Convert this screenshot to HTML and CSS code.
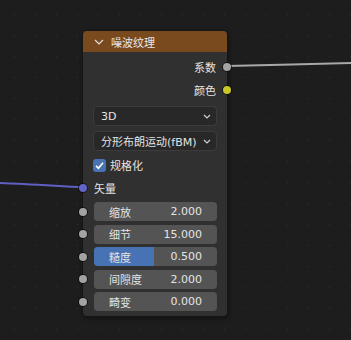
FILE: index.html
```html
<!DOCTYPE html>
<html lang="zh">
<head>
  <meta charset="UTF-8" />
  <title>噪波纹理</title>
  <link rel="stylesheet" href="styles.css">
</head>
<body>
  <div class="canvas">
    <svg class="wires" width="351" height="340" viewBox="0 0 351 340">
      <path d="M227 66 C 280 65, 300 64, 351 63" stroke="#a8a8a8" stroke-width="2" fill="none"/>
      <path d="M0 183 C 30 184, 55 186, 83 187.5" stroke="#5f5fc4" stroke-width="2" fill="none"/>
    </svg>

    <div class="node">
      <div class="node-header">
        <svg class="chevron" width="10" height="6" viewBox="0 0 10 6">
          <path d="M1 1 L5 5 L9 1" stroke="#e0e0e0" stroke-width="1.2" fill="none"/>
        </svg>
        <span>噪波纹理</span>
      </div>

      <div class="node-body">
        <div class="out-row">系数<i class="socket out grey"></i></div>
        <div class="out-row">颜色<i class="socket out yellow"></i></div>

        <div class="dropdowns">
          <div class="dropdown">
            <span>3D</span>
            <svg width="8" height="5" viewBox="0 0 8 5"><path d="M1 1 L4 4 L7 1" stroke="#d0d0d0" stroke-width="1.2" fill="none"/></svg>
          </div>
          <div class="dropdown">
            <span>分形布朗运动(fBM)</span>
            <svg width="8" height="5" viewBox="0 0 8 5"><path d="M1 1 L4 4 L7 1" stroke="#d0d0d0" stroke-width="1.2" fill="none"/></svg>
          </div>
        </div>

        <div class="check-row">
          <span class="checkbox">
            <svg width="13" height="13" viewBox="0 0 13 13"><path d="M3 6.8 L5.4 9.2 L10 3.8" stroke="#fff" stroke-width="1.7" fill="none"/></svg>
          </span>
          规格化
        </div>

        <div class="in-row"><i class="socket in purple"></i>矢量</div>

        <div class="fields">
          <div class="field"><i class="socket in grey"></i><span>缩放</span><span>2.000</span></div>
          <div class="field"><i class="socket in grey"></i><span>细节</span><span>15.000</span></div>
          <div class="field"><i class="socket in grey"></i><b class="fill" style="width: 49%"></b><span>糙度</span><span>0.500</span></div>
          <div class="field"><i class="socket in grey"></i><span>间隙度</span><span>2.000</span></div>
          <div class="field"><i class="socket in grey"></i><span>畸变</span><span>0.000</span></div>
        </div>
      </div>
    </div>
  </div>
</body>
</html>
```

FILE: styles.css
```css
body {
  margin: 0;
  padding: 0;
  background: #1d1d1d;
  font-family: "DejaVu Sans", "Noto Sans CJK SC", sans-serif;
  font-size: 11px;
  color: #e4e4e4;
}

.canvas {
  position: relative;
  width: 351px;
  height: 340px;
  overflow: hidden;
  background-color: #1d1d1d;
  background-image: radial-gradient(circle, #262626 0.8px, transparent 1.2px);
  background-size: 21px 21px;
  background-position: 4px 4px;
}

.wires {
  position: absolute;
  left: 0;
  top: 0;
}

.node {
  position: absolute;
  left: 83px;
  top: 31px;
  width: 144px;
  height: 285px;
  background: #303030;
  border-radius: 4px;
  box-shadow: 0 0 0 1px #161616, 1px 2px 5px rgba(0, 0, 0, 0.5);
}

.node-header {
  height: 21px;
  background: #7a4a1f;
  border-radius: 4px 4px 0 0;
  display: flex;
  align-items: center;
  padding-left: 11px;
  gap: 7px;
  color: #e8e8e8;
}

.node-body {
  display: flex;
  flex-direction: column;
  padding: 3px 10px 0 10px;
}

.socket {
  position: absolute;
  width: 8px;
  height: 8px;
  border-radius: 50%;
  top: 50%;
  margin-top: -4px;
  box-shadow: 0 0 0 1px rgba(0, 0, 0, 0.55);
}

.socket.out { right: -14px; }
.socket.in { left: -14px; }
.socket.grey { background: #a3a3a3; }
.socket.yellow { background: #c7c729; }
.socket.purple { background: #6363c7; }

.out-row {
  position: relative;
  height: 23px;
  display: flex;
  align-items: center;
  justify-content: flex-end;
  padding-right: 1px;
}

.dropdowns {
  display: flex;
  flex-direction: column;
  gap: 5px;
  margin-top: 5px;
}

.dropdown {
  height: 20px;
  box-sizing: border-box;
  background: #282828;
  border: 1px solid #3c3c3c;
  border-radius: 4px;
  display: flex;
  align-items: center;
  justify-content: space-between;
  padding: 0 5px 0 7px;
}

.check-row {
  height: 20px;
  margin-top: 4px;
  display: flex;
  align-items: center;
  gap: 4px;
}

.checkbox {
  width: 13px;
  height: 13px;
  background: #4772b3;
  border-radius: 3px;
  display: flex;
}

.in-row {
  position: relative;
  height: 23px;
  margin-top: 1px;
  display: flex;
  align-items: center;
  padding-left: 1px;
}

.fields {
  display: flex;
  flex-direction: column;
  gap: 3.5px;
  margin-top: 3px;
}

.field {
  position: relative;
  height: 19px;
  margin-left: 1px;
  background: #545454;
  border-radius: 4px;
  display: flex;
  align-items: center;
  justify-content: space-between;
  padding: 0 15px;
}

.field .socket.in { left: -15px; }

.field span {
  position: relative;
}

.fill {
  position: absolute;
  left: 0;
  top: 0;
  bottom: 0;
  background: #4772b3;
  border-radius: 4px 0 0 4px;
}
```
